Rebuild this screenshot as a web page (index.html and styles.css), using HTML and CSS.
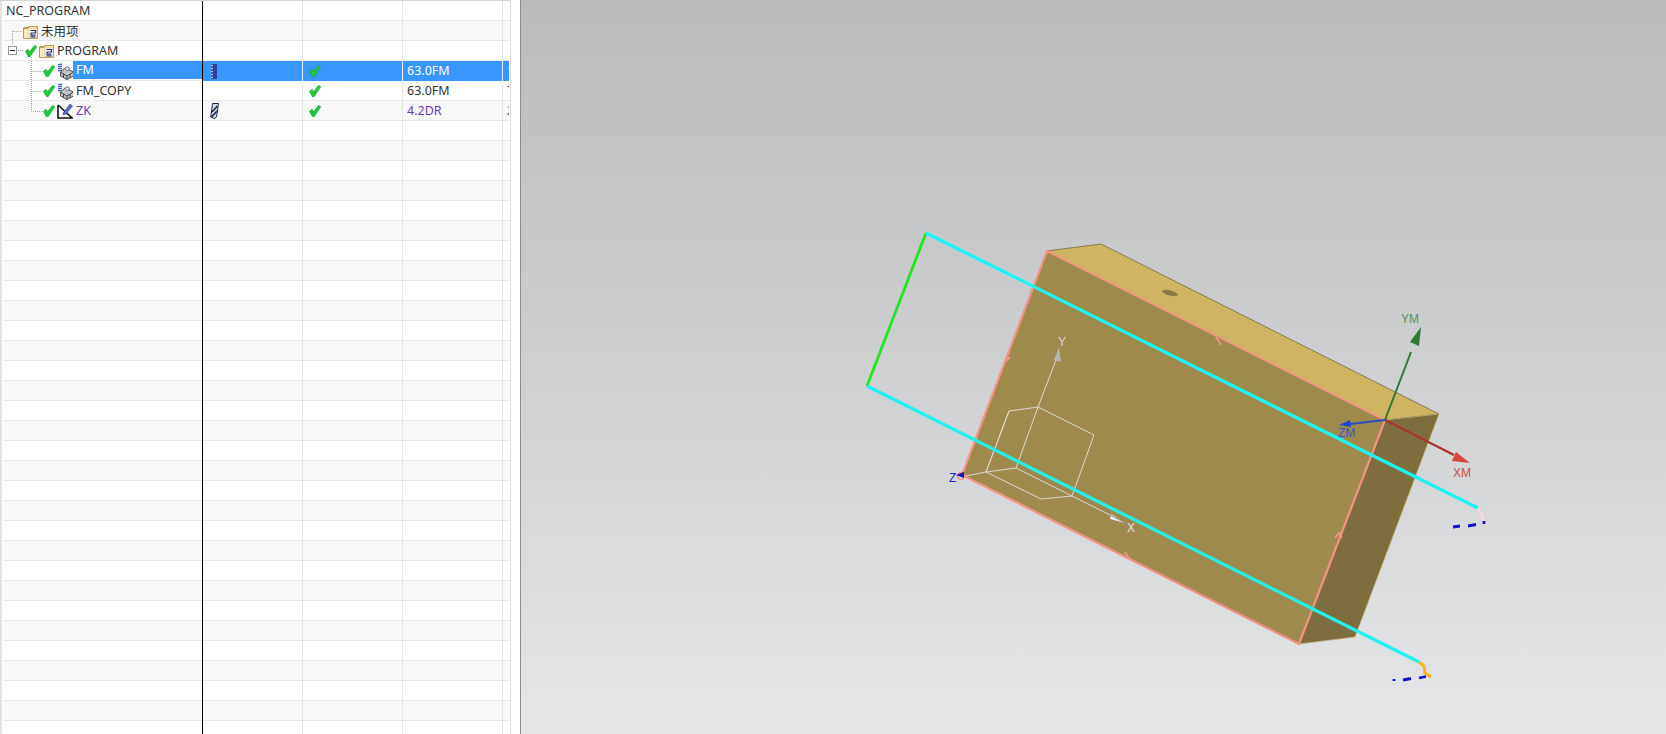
FILE: index.html
```html
<!DOCTYPE html>
<html lang="zh">
<head>
<meta charset="UTF-8">
<title>NC_PROGRAM</title>
<link rel="stylesheet" href="styles.css">
</head>
<body>
<svg class="defs" width="0" height="0">
<symbol id="check" viewBox="0 0 12 12">
<path d="M0.3 6.2 L3 4.2 L4.7 6.4 L9.6 0.3 L11.8 1.8 L5.2 11.7 L3.4 11.7 Z" fill="#1fc83c" stroke="#149a2c" stroke-width=".5"/>
</symbol>
<symbol id="folder" viewBox="0 0 15 14">
<path d="M.5 3 V13.5 H14.5 V1.5 H6 L5 3 Z" fill="#f8e9b8" stroke="#bb9a4e"/>
<path d="M.5 3 H5 L6 1.5" fill="none" stroke="#8f7a3e"/>
<rect x="6" y="4" width="8" height="9" fill="#fff" stroke="#c4b27a" stroke-width=".6"/>
<path d="M7.5 5.5 H12.500 V8 H8 V10.200 H12.500 M7.500 11.800 H12.500" fill="none" stroke="#27307a" stroke-width="1.2"/>
</symbol>
<symbol id="oper" viewBox="0 0 17 17">
<path d="M1 8.500 V1 L5 .5 V8 Z" fill="#3f63c4"/>
<path d="M1 2.500 H5 M1 4.500 H5 M1 6.500 H5" stroke="#c4d2f2"/>
<path d="M3.500 9 L8 5 L16.500 9 V13 L10 16.500 L3.500 13 Z" fill="#c2c5c7" stroke="#4a4e52"/>
<path d="M3.500 9.200 L10 13 L16 9.400 M10 13 V16.500 M6.500 11 V14.500 M13 11.200 V14.800" fill="none" stroke="#3e4246"/>
<path d="M7.500 5.500 L10 3.500 L13 5.500 L10.500 7.800 Z" fill="#e2e4e6" stroke="#55595c" stroke-width=".8"/>
</symbol>
<symbol id="drillop" viewBox="0 0 16 16">
<path d="M1 2 V15 H15 L6 6.500 L1 2" fill="none" stroke="#111" stroke-width="1.600"/>
<path d="M6.500 9.500 L13 1 L15.500 3 L9 11 L6 12 Z" fill="#5a6fc4" stroke="#33408c" stroke-width=".6"/>
</symbol>
<symbol id="cutter" viewBox="0 0 8 15">
<rect x="1" y="0" width="6" height="15" fill="#2f3f9e"/>
<path d="M1 1.500 H3 M1 4.500 H3 M1 7.500 H3 M1 10.500 H3 M1 13.500 H3" stroke="#a9bcf0" stroke-width="1.400"/>
</symbol>
<symbol id="drill" viewBox="0 0 9 16">
<path d="M2.500 .5 H8.500 L6.500 14 L4.500 15.500 L.8 14 Z" fill="#d4d7e0" stroke="#1f2750"/>
<path d="M2 9 L7.500 3 M1.500 14 L7 8" stroke="#1f2750" stroke-width="1.600"/>
</symbol>
</svg>

<div class="app">
<div class="navigator">
<div class="row"><div class="cell name"><span class="rootlabel">NC_PROGRAM</span></div><div class="cell"></div><div class="cell"></div><div class="cell"></div><div class="cell last"></div></div>

<div class="row">
<div class="cell name">
<svg class="tree" width="35" height="20"><path class="guide" d="M9.5 10.5 H19 M9.5 10 V20"/><use href="#folder" x="20" y="4" width="15" height="14"/></svg>
<span class="label">未用项</span>
</div>
<div class="cell"></div><div class="cell"></div><div class="cell"></div><div class="cell last"></div>
</div>

<div class="row">
<div class="cell name">
<svg class="tree" width="51" height="20"><path class="guide" d="M9.5 0 V4 M15 9.5 H21 M28.5 16 V20"/><rect class="expander" x="5.5" y="5.5" width="8" height="8"/><path class="minus" d="M7 9.5 H12"/><use href="#check" x="22" y="4" width="12" height="12"/><use href="#folder" x="36" y="3" width="15" height="14"/></svg>
<span class="label">PROGRAM</span>
</div>
<div class="cell"></div><div class="cell"></div><div class="cell"></div><div class="cell last"></div>
</div>

<div class="row selected">
<div class="cell name">
<svg class="tree" width="70" height="20"><path class="guide" d="M28.5 0 V20 M28.5 10.5 H39"/><use href="#check" x="40" y="4" width="12" height="12"/><use href="#oper" x="54" y="2" width="17" height="17"/></svg>
<span class="label">FM</span>
</div>
<div class="cell tool"><svg width="8" height="15"><use href="#cutter"/></svg></div>
<div class="cell status"><svg width="12" height="12"><use href="#check"/></svg></div>
<div class="cell text">63.0FM</div>
<div class="cell last text">1</div>
</div>

<div class="row">
<div class="cell name">
<svg class="tree" width="70" height="20"><path class="guide" d="M28.5 0 V20 M28.5 10.5 H39"/><use href="#check" x="40" y="4" width="12" height="12"/><use href="#oper" x="54" y="2" width="17" height="17"/></svg>
<span class="label">FM_COPY</span>
</div>
<div class="cell"></div>
<div class="cell status"><svg width="12" height="12"><use href="#check"/></svg></div>
<div class="cell text">63.0FM</div>
<div class="cell last text">7</div>
</div>

<div class="row drilling">
<div class="cell name">
<svg class="tree" width="70" height="20"><path class="guide" d="M28.5 0 V10.5 H39"/><use href="#check" x="40" y="4" width="12" height="12"/><use href="#drillop" x="54" y="2" width="16" height="16"/></svg>
<span class="label">ZK</span>
</div>
<div class="cell tool"><svg width="9" height="16"><use href="#drill"/></svg></div>
<div class="cell status"><svg width="12" height="12"><use href="#check"/></svg></div>
<div class="cell text">4.2DR</div>
<div class="cell last text">2</div>
</div>

<div class="rows-empty"></div>
</div>

<div class="divider"></div>

<div class="viewport">
<svg class="scene" viewBox="521 0 1145 734" width="1145" height="734">
<polygon points="1047,251 1101,244 1439,414 1385,420" fill="#cdb562" stroke="#857a4e"/>
<polygon points="1385,420 1439,414 1355,637 1299,644" fill="#7e6e3d" stroke="#c4b678" stroke-width=".7"/>
<polygon points="1047,251 1385,420 1299,644 962,475" fill="#9e8b4c"/>
<ellipse cx="1170" cy="293" rx="8" ry="2.600" transform="rotate(14 1170 293)" fill="#8b7b43"/>

<polygon points="1047,251 1385,420 1299,644 962,475" fill="none" stroke="#f29484" stroke-width="2.200"/>
<path d="M1216 337 L1221 345 M1005 362 L1010 357 M1125 552 L1130 560 M1335 538 L1339 533 L1342 538" fill="none" stroke="#f29484" stroke-width="1.800"/>

<path d="M1009 411 L1038 407 L1094 435 L1072 496 L1041 499 L986 472 Z M1009 411 L986 472 M986 472 L1016 468 L1072 496 M1016 468 L1038 407" fill="none" stroke="#dcdad0"/>
<path d="M1038 407 L1056 360 M966 476 L986 472 M1072 496 L1112 516" fill="none" stroke="#dcdad0"/>
<polygon points="1059,347 1061,362 1054,360" fill="#b4b6b8"/>
<polygon points="1125,523 1111,514 1110,519" fill="#f2f2f2"/>
<path d="M1110 515 L1125 523" stroke="#8f8f8f"/>

<path d="M926 233 L867 386" stroke="#1fe61f" stroke-width="2.800"/>
<path d="M926 233 L1478 508 M867 386 L1419 662" fill="none" stroke="#1cf4f4" stroke-width="3.200"/>

<path d="M1385 420 L1411 352" stroke="#2f7a35" stroke-width="2"/>
<polygon points="1421,327 1419,346 1410,342" fill="#2f7a35"/>
<path d="M1385 420 L1454 455" stroke="#a8352c" stroke-width="2.400"/>
<polygon points="1470,463 1452,461 1456,452" fill="#d8453c"/>
<path d="M1385 420 L1350 424" stroke="#2a4cc0" stroke-width="2.200"/>
<polygon points="1339,425 1350,420 1351,427" fill="#1f47d4"/>

<circle cx="961" cy="476" r="3.500" fill="none" stroke="#f29484" stroke-width="1.500"/>
<polygon points="956,475 964,472 964,478" fill="#1414b4"/>

<path d="M1478 508 L1482 515 L1484 523 L1488 523" fill="none" stroke="#f6d8e4" stroke-width="2.400"/>
<path d="M1453 527 L1460 526 M1468 526 L1476 524.500 M1484 521 V524" fill="none" stroke="#1010d0" stroke-width="2.800"/>
<path d="M1419 662 L1424 666 L1425 673 L1431 677" fill="none" stroke="#f5b41e" stroke-width="3"/>
<path d="M1403 680 L1411 678.500 M1419 678 L1426 676.500 M1394 679 V681" fill="none" stroke="#1010d0" stroke-width="2.800"/>

<text class="axis" x="1058" y="346" fill="#dcdcdc">Y</text>
<text class="axis" x="1127" y="532" fill="#e4e4e4">X</text>
<text class="axis" x="949" y="482" fill="#2222cc">Z</text>
<text class="axis" x="1401" y="323" fill="#4f8f5f">YM</text>
<text class="axis" x="1453" y="477" fill="#c94f4a">XM</text>
<text class="axis" x="1338" y="437" fill="#3456cc">ZM</text>
</svg>
</div>
</div>
</body>
</html>
```
FILE: styles.css
```css
html, body {
  margin: 0;
  height: 100%;
  overflow: hidden;
}
body {
  font-family: "Noto Sans", "Noto Sans CJK SC", sans-serif;
  font-size: 12.5px;
  color: #333;
  background: #fff;
}
.defs {
  display: block;
}
.app {
  display: flex;
  height: 734px;
}

/* operation navigator */
.navigator {
  width: 507px;
  padding: 0 0 0 3px;
  border-top: 1px solid #d6d6d6;
  border-right: 1px solid #dcdcdc;
  box-shadow: inset 2px 0 0 #e2e2e2;
  display: flex;
  flex-direction: column;
  overflow: hidden;
  flex-shrink: 0;
}
.row {
  display: grid;
  grid-template-columns: 200px 100px 100px 100px 6px;
  height: 20px;
  flex-shrink: 0;
  box-sizing: border-box;
  border-bottom: 1px solid #e9e9e9;
}
.row:nth-child(even) {
  background: #f9f9f9;
}
.cell {
  box-sizing: border-box;
  border-right: 1px solid #e3e7eb;
  height: 20px;
  overflow: hidden;
  white-space: nowrap;
  display: flex;
  align-items: center;
  margin-bottom: -1px;
}
.cell.last {
  border-right: none;
}
.cell.name {
  border-right: 1px solid #000;
}
.cell.text {
  padding-left: 4px;
  padding-bottom: 2px;
}
.cell.tool {
  padding-left: 7px;
}
.cell.status {
  padding-left: 6px;
}
.rootlabel {
  padding-left: 3px;
  margin-bottom: 2px;
}
.label {
  padding-left: 3px;
  margin-bottom: 2px;
}
.tree {
  flex-shrink: 0;
  display: block;
}
.guide {
  fill: none;
  stroke: #a0a0a0;
  stroke-dasharray: 1 1;
}
.expander {
  fill: #fff;
  stroke: #9a9a9a;
}
.minus {
  stroke: #222;
}

.row.selected {
  background: #fcfcfc;
}
.row.selected .cell:not(.name) {
  background: #3a96ff;
  color: #fff;
  border-right-color: #e8f2ff;
}
.row.selected .label {
  background: #3a96ff;
  color: #fff;
  align-self: stretch;
  line-height: 17px;
  flex: 1;
}
.row.drilling .label,
.row.drilling .text {
  color: #6a3db4;
}

.rows-empty {
  flex: 1;
  background:
    linear-gradient(#e3e7eb, #e3e7eb) 499px 0 / 1px 100% no-repeat,
    linear-gradient(#e3e7eb, #e3e7eb) 399px 0 / 1px 100% no-repeat,
    linear-gradient(#e3e7eb, #e3e7eb) 299px 0 / 1px 100% no-repeat,
    linear-gradient(#000, #000) 199px 0 / 1px 100% no-repeat,
    repeating-linear-gradient(#fff 0, #fff 19px, #e9e9e9 19px, #e9e9e9 20px, #f9f9f9 20px, #f9f9f9 39px, #e9e9e9 39px, #e9e9e9 40px);
}

.divider {
  width: 9px;
  background: #fff;
  border-right: 1px solid #8c8c8c;
  flex-shrink: 0;
}

/* graphics window */
.viewport {
  flex: 1;
  background: linear-gradient(#b8babc, #e5e6e8);
  overflow: hidden;
}
.scene {
  display: block;
}
.axis {
  font-family: "Liberation Sans", sans-serif;
  font-size: 12px;
}
```
